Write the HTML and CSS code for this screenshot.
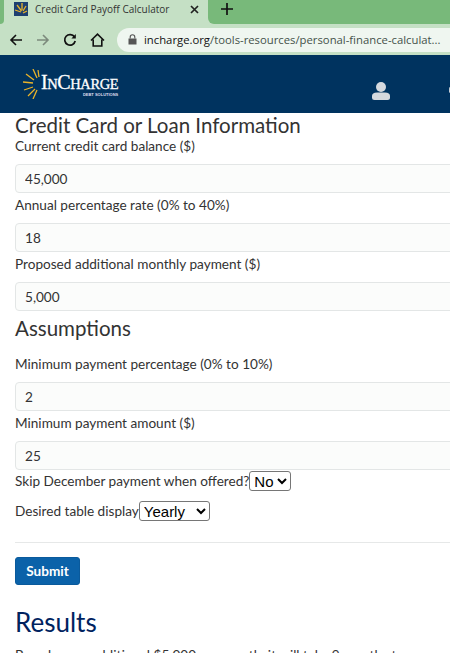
FILE: index.html

```html
<!DOCTYPE html>
<html lang="en">
<head>
  <meta charset="UTF-8">
  <title>Credit Card Payoff Calculator</title>
  <link rel="stylesheet" href="styles.css">
</head>
<body>

<div class="tabstrip">
  <div class="tab-stub"></div>
  <div class="tab">
    <svg class="favicon" width="14" height="14" viewBox="0 0 14 14">
      <rect width="14" height="14" fill="#1d3f70"/>
      <g stroke="#e9b32a" stroke-width="1.3">
        <path d="M7 10 L1 8"/><path d="M7.5 9 L3 3"/><path d="M8 8 L8 1"/><path d="M9 9 L12 4"/><path d="M9 11 L13 9"/>
      </g>
    </svg>
    <span class="tab-title">Credit Card Payoff Calculator</span>
    <svg class="tab-close" width="9" height="9" viewBox="0 0 9 9">
      <path d="M1 1 L8 8 M8 1 L1 8" stroke="#222" stroke-width="1.7"/>
    </svg>
  </div>
  <div class="tab-rest">
    <svg class="newtab" width="12" height="12" viewBox="0 0 12 12">
      <path d="M6 0 V12 M0 6 H12" stroke="#111" stroke-width="1.7"/>
    </svg>
  </div>
</div>

<div class="toolbar">
  <svg width="14" height="14" viewBox="0 0 14 14" class="nav">
    <path d="M13 7 H2 M7 2 L2 7 L7 12" fill="none" stroke="#111" stroke-width="1.6"/>
  </svg>
  <svg width="14" height="14" viewBox="0 0 14 14" class="nav">
    <path d="M1 7 H12 M7 2 L12 7 L7 12" fill="none" stroke="#7c8a7c" stroke-width="1.6"/>
  </svg>
  <svg width="14" height="14" viewBox="0 0 14 14" class="nav">
    <path d="M11.5 4 A5.3 5.3 0 1 0 12.2 8" fill="none" stroke="#111" stroke-width="1.7"/>
    <path d="M12.8 1 V5.4 H8.4 Z" fill="#111"/>
  </svg>
  <svg width="15" height="14" viewBox="0 0 15 14" class="nav">
    <path d="M1 7.5 L7.5 1.2 L14 7.5 M3.2 6.5 V13 H11.8 V6.5" fill="none" stroke="#111" stroke-width="1.6"/>
  </svg>
  <div class="omnibox">
    <svg class="lock" width="9" height="11" viewBox="0 0 9 11">
      <rect x="0.5" y="4.5" width="8" height="6" fill="#555"/>
      <path d="M2.2 4.5 V3 A2.3 2.3 0 0 1 6.8 3 V4.5" fill="none" stroke="#555" stroke-width="1.1"/>
    </svg>
    <span class="url"><b>incharge.org</b>/tools-resources/personal-finance-calculat...</span>
  </div>
</div>

<header class="site-header">
  <div class="logo">
    <svg class="sun" width="18" height="30" viewBox="0 0 18 30">
      <g stroke="#e9b32a" stroke-width="1.3">
        <path d="M10 0 L14 9"/><path d="M15 1 L16 8"/><path d="M3 5 L11 11"/><path d="M0 13 L10 14"/>
        <path d="M1 21 L10 18"/><path d="M5 27 L12 20"/><path d="M10 30 L14 21"/>
      </g>
    </svg>
    <div class="logo-text">
      <span class="logo-name">I<small>N</small>C<small>HARGE</small></span>
      <span class="logo-sub">DEBT SOLUTIONS</span>
    </div>
  </div>
  <svg class="user" width="18" height="18" viewBox="0 0 18 18">
    <circle cx="9" cy="5" r="5" fill="#d5d9de"/>
    <path d="M0 15.5 V14 Q0 10.5 5 10.5 H13 Q18 10.5 18 14 V15.5 Q18 18 15.5 18 H2.5 Q0 18 0 15.5 Z" fill="#d5d9de"/>
  </svg>
  <span class="edge-icon"></span>
</header>

<main class="content">
  <h2>Credit Card or Loan Information</h2>

  <label class="field-label">Current credit card balance ($)</label>
  <input class="field" type="text" value="45,000">

  <label class="field-label">Annual percentage rate (0% to 40%)</label>
  <input class="field" type="text" value="18">

  <label class="field-label">Proposed additional monthly payment ($)</label>
  <input class="field" type="text" value="5,000">

  <h2 class="section">Assumptions</h2>

  <label class="field-label">Minimum payment percentage (0% to 10%)</label>
  <input class="field" type="text" value="2">

  <label class="field-label">Minimum payment amount ($)</label>
  <input class="field" type="text" value="25">

  <div class="select-row">
    <label>Skip December payment when offered?</label>
    <select class="short"><option>No</option><option>Yes</option></select>
  </div>
  <div class="select-row">
    <label>Desired table display</label>
    <select class="long"><option>Yearly</option><option>Monthly</option></select>
  </div>

  <hr>

  <button class="submit">Submit</button>

  <h1 class="results">Results</h1>
  <p class="summary">Based on an additional $5,000 per month, it will take 9 months to pay</p>
</main>

</body>
</html>
```

FILE: styles.css

```css
html, body {
  margin: 0;
  height: 653px;
  overflow: hidden;
}
body {
  width: 450px;
  font-family: Lato, sans-serif;
  background-color: #fff;
  color: #333;
}

/* browser chrome */
.tabstrip {
  display: flex;
  height: 24px;
  background-color: #c5e0c5;
}
.tab-stub {
  width: 4px;
  background-color: #78b97a;
  border-bottom-right-radius: 6px;
}
.tab {
  display: flex;
  align-items: center;
  width: 204px;
  padding: 0 0 6px 10px;
  box-sizing: border-box;
}
.favicon {
  flex: none;
}
.tab-title {
  flex: 1;
  margin-left: 7px;
  font: 10px "Open Sans", sans-serif;
  color: #333;
  white-space: nowrap;
}
.tab-close {
  flex: none;
  margin-right: 9px;
}
.tab-rest {
  flex: 1;
  display: flex;
  align-items: center;
  padding-bottom: 6px;
  background-color: #78b97a;
  border-bottom-left-radius: 6px;
}
.newtab {
  margin-left: 13px;
}
.toolbar {
  display: flex;
  align-items: center;
  height: 31px;
  padding-left: 9px;
  box-sizing: border-box;
  background-color: #c5e0c5;
}
.nav {
  flex: none;
  margin-right: 13px;
}
.omnibox {
  flex: 1;
  display: flex;
  align-items: center;
  gap: 7px;
  height: 24px;
  padding-left: 11px;
  margin-left: -1px;
  border-radius: 12px 0 0 12px;
  background-color: #eff6f0;
}
.lock {
  flex: none;
}
.url {
  font: 11.3px "Open Sans", sans-serif;
  color: #44514a;
  white-space: nowrap;
}
.url b {
  font-weight: 400;
  color: #111;
}

/* site header */
.site-header {
  position: relative;
  display: flex;
  align-items: center;
  height: 58px;
  background-color: #00335f;
}
.logo {
  display: flex;
  align-items: center;
  margin-left: 23px;
}
.sun {
  flex: none;
}
.logo-text {
  display: flex;
  flex-direction: column;
  align-items: flex-end;
  margin-top: 4px;
}
.logo-name {
  font: 20px/15px "Liberation Serif", serif;
  letter-spacing: -0.4px;
  color: #fff;
  -webkit-text-stroke: 0.3px #fff;
}
.logo-name small {
  font-size: 14.5px;
}
.logo-sub {
  font: bold 4px/5px "Liberation Sans", sans-serif;
  color: #dde;
}
.user {
  position: absolute;
  left: 372px;
  top: 27px;
}
.edge-icon {
  position: absolute;
  left: 449px;
  top: 32px;
  width: 3px;
  height: 6px;
  border-radius: 2px;
  background-color: #c3cbd3;
}

/* form */
.content {
  width: 520px;
  padding-left: 15px;
}
h2 {
  margin: 0;
  font-weight: 400;
  font-size: 20.5px;
  line-height: 25px;
  color: #333;
}
.section {
  margin: 5px 0 15px;
}
.field-label {
  display: block;
  font-size: 13.6px;
  line-height: 17px;
  margin-bottom: 9px;
}
.field + .field-label {
  margin-top: 4px;
}
.field {
  display: block;
  width: 100%;
  height: 29px;
  box-sizing: border-box;
  padding: 0 9px;
  border: 1px solid #e3e6e6;
  border-radius: 4px;
  background-color: #fbfcfb;
  font: 13.6px Lato, sans-serif;
  color: #333;
}
.select-row {
  display: flex;
  align-items: center;
  height: 20px;
  margin-top: 10px;
  font-size: 13.6px;
}
.field + .select-row {
  margin-top: 1px;
}
.select-row select {
  height: 20px;
  padding: 0;
  background-color: #fff;
  border: 1px solid #767676;
  border-radius: 3px;
  font: 15px "Liberation Sans", sans-serif;
  color: #000;
}
.short {
  width: 42px;
}
.long {
  width: 71px;
}
hr {
  width: 435px;
  margin: 21px 0 14px;
  border: none;
  border-top: 1px solid #e6e8e8;
}
.submit {
  display: block;
  width: 65px;
  height: 28px;
  padding: 0;
  background-color: #0b62a9;
  color: #fff;
  border: 1px solid #0a5a9c;
  border-radius: 3px;
  font: bold 13.6px Lato, sans-serif;
}
.results {
  margin: 20px 0 0;
  font-weight: 400;
  font-size: 26px;
  line-height: 34px;
  color: #00235f;
}
.summary {
  margin: 8px 0 0;
  font-size: 13.6px;
  white-space: nowrap;
}
```
